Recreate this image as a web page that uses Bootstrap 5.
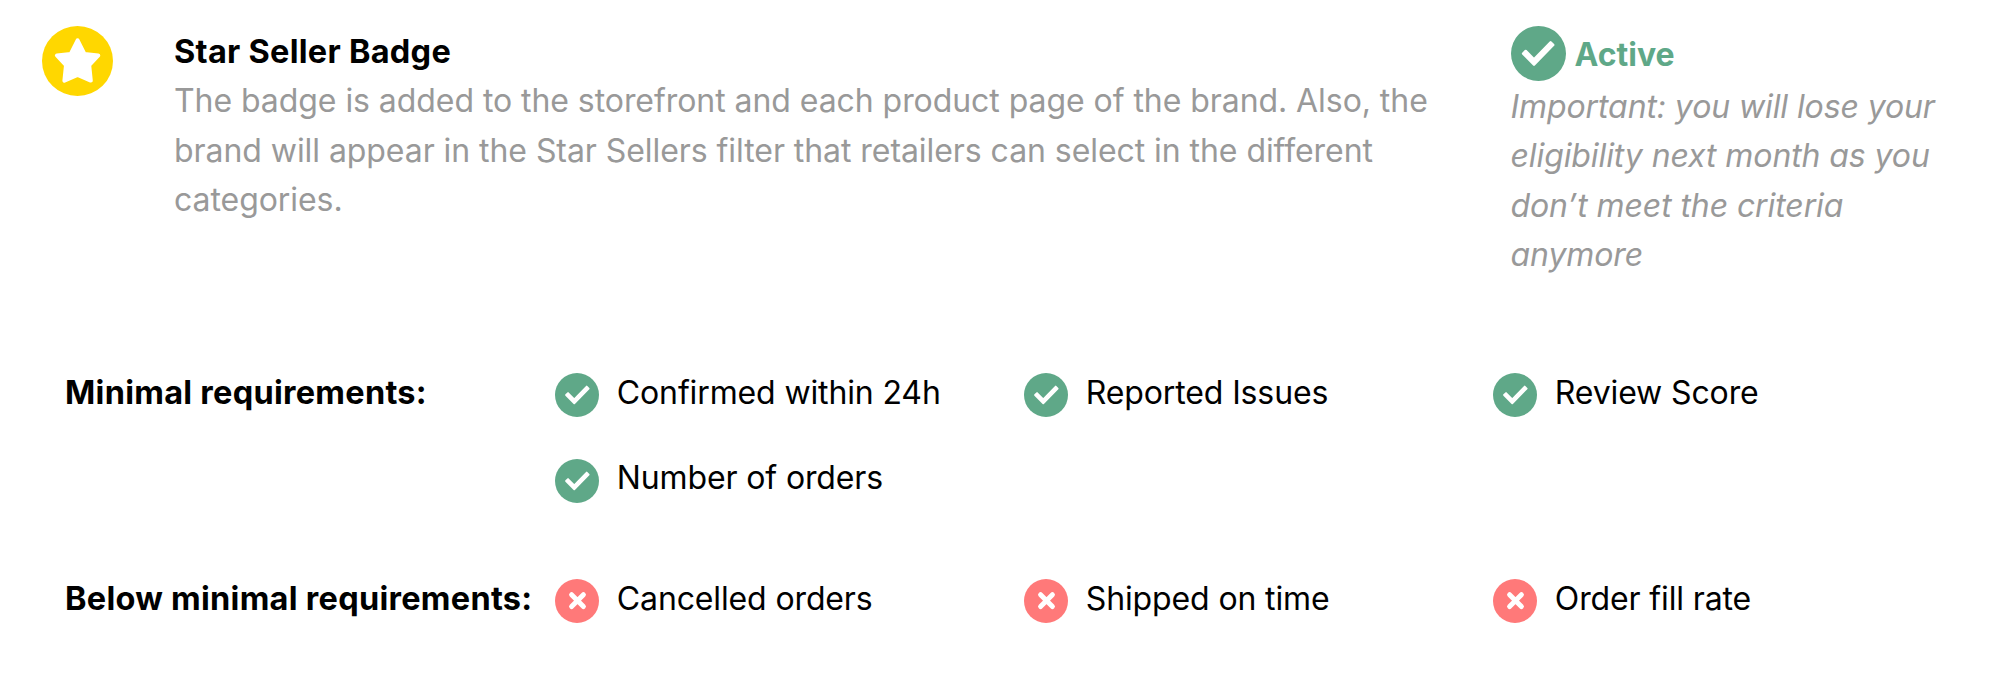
<!DOCTYPE html>
<html lang="en">
<head>
<meta charset="utf-8">
<meta name="viewport" content="width=device-width, initial-scale=1">
<title>Star Seller Badge</title>
<link href="https://cdn.jsdelivr.net/npm/bootstrap@5.3.0/dist/css/bootstrap.min.css" rel="stylesheet">
<style>
  body { font-family: Inter, "Liberation Sans", sans-serif; font-size: 32px; line-height: 49.4px; letter-spacing: -.06px; color: #000; background: #fff; }
  .badge-head { padding: 26px 40px 0 42px; height: 368px; }
  .badge-copy { width: 1276px; margin-left: 61px; padding-top: 1px; }
  .badge-status { width: 450px; margin-left: 60.5px; }
  .strong-text { font-size: 32.5px; line-height: 49.4px; font-weight: 700; letter-spacing: .27px; }
  .soft-text { color: #999; }
  .badge-status .soft-text { padding-top: 1px; letter-spacing: -.1px; }
  .status-label { color: #5fa888; font-weight: 700; letter-spacing: 0; line-height: 55px; padding-top: 1px; height: 55px; margin-left: 9px; }
  .criteria { display: grid; grid-template-columns: 490px 469px 469px 1fr; row-gap: 36px; padding-left: 65px; }
  .criteria + .criteria { margin-top: 70.8px; }
  .criterion { display: flex; gap: 17.8px; letter-spacing: -.13px; }
  .criterion svg { margin-top: 5px; }
  .second-line { grid-column: 2; }
  .second-line svg { margin-top: 5.6px; }
</style>
</head>
<body>
<svg class="d-none" aria-hidden="true">
  <symbol id="tick" viewBox="0 0 55 55">
    <path d="M14.7 25 23 33.4 39.6 16.4 42.2 19 23 38.6 12.1 27.6Z" fill="#fff" stroke="#fff" stroke-width="2.5" stroke-linejoin="round"/>
  </symbol>
  <symbol id="ok" viewBox="0 0 44 44">
    <circle cx="22" cy="22" r="22" fill="#5fa888"/>
    <use href="#tick" x="2" y="1.3" width="41.25" height="41.25"/>
  </symbol>
  <symbol id="fail" viewBox="0 0 44 44">
    <circle cx="22" cy="22" r="22" fill="#ff7979"/>
    <path d="M16.6 15.7 28.4 27.5M28.4 15.7 16.6 27.5" stroke="#fff" stroke-width="5" stroke-linecap="round"/>
  </symbol>
</svg>

<header class="badge-head d-flex align-items-start">
  <svg class="flex-shrink-0" width="71" height="70" viewBox="0 0 71 70">
    <ellipse cx="35.5" cy="35" rx="35.5" ry="35" fill="#ffd700"/>
    <path d="M35.6 14.4 42.4 28 56.3 29.5 47.2 39.2 48.8 54.6 35.6 48.8 22.4 54.6 24 39.2 14.9 29.5 28.8 28Z" fill="#fff" stroke="#fff" stroke-width="4" stroke-linejoin="round"/>
  </svg>
  <div class="badge-copy flex-shrink-0">
    <h1 class="strong-text m-0">Star Seller Badge</h1>
    <p class="soft-text m-0">The badge is added to the storefront and each product page of the brand. Also, the brand will appear in the Star Sellers filter that retailers can select in the different categories.</p>
  </div>
  <div class="badge-status flex-shrink-0">
    <div class="d-flex">
      <svg class="flex-shrink-0" width="55" height="55" viewBox="0 0 55 55">
        <circle cx="27.5" cy="27.5" r="27.5" fill="#5fa888"/>
        <use href="#tick" width="55" height="55"/>
      </svg>
      <span class="status-label">Active</span>
    </div>
    <p class="soft-text m-0"><em>Important: you will lose your eligibility next month as you don’t meet the criteria anymore</em></p>
  </div>
</header>

<main>
  <section class="criteria">
    <h2 class="strong-text m-0">Minimal requirements:</h2>
    <div class="criterion"><svg width="44" height="44"><use href="#ok"/></svg><span>Confirmed within 24h</span></div>
    <div class="criterion"><svg width="44" height="44"><use href="#ok"/></svg><span>Reported Issues</span></div>
    <div class="criterion"><svg width="44" height="44"><use href="#ok"/></svg><span>Review Score</span></div>
    <div class="criterion second-line"><svg width="44" height="44"><use href="#ok"/></svg><span>Number of orders</span></div>
  </section>
  <section class="criteria">
    <h2 class="strong-text m-0">Below minimal requirements:</h2>
    <div class="criterion"><svg width="44" height="44"><use href="#fail"/></svg><span>Cancelled orders</span></div>
    <div class="criterion"><svg width="44" height="44"><use href="#fail"/></svg><span>Shipped on time</span></div>
    <div class="criterion"><svg width="44" height="44"><use href="#fail"/></svg><span>Order fill rate</span></div>
  </section>
</main>
<script src="https://cdn.jsdelivr.net/npm/bootstrap@5.3.0/dist/js/bootstrap.bundle.min.js"></script>
</body>
</html>
